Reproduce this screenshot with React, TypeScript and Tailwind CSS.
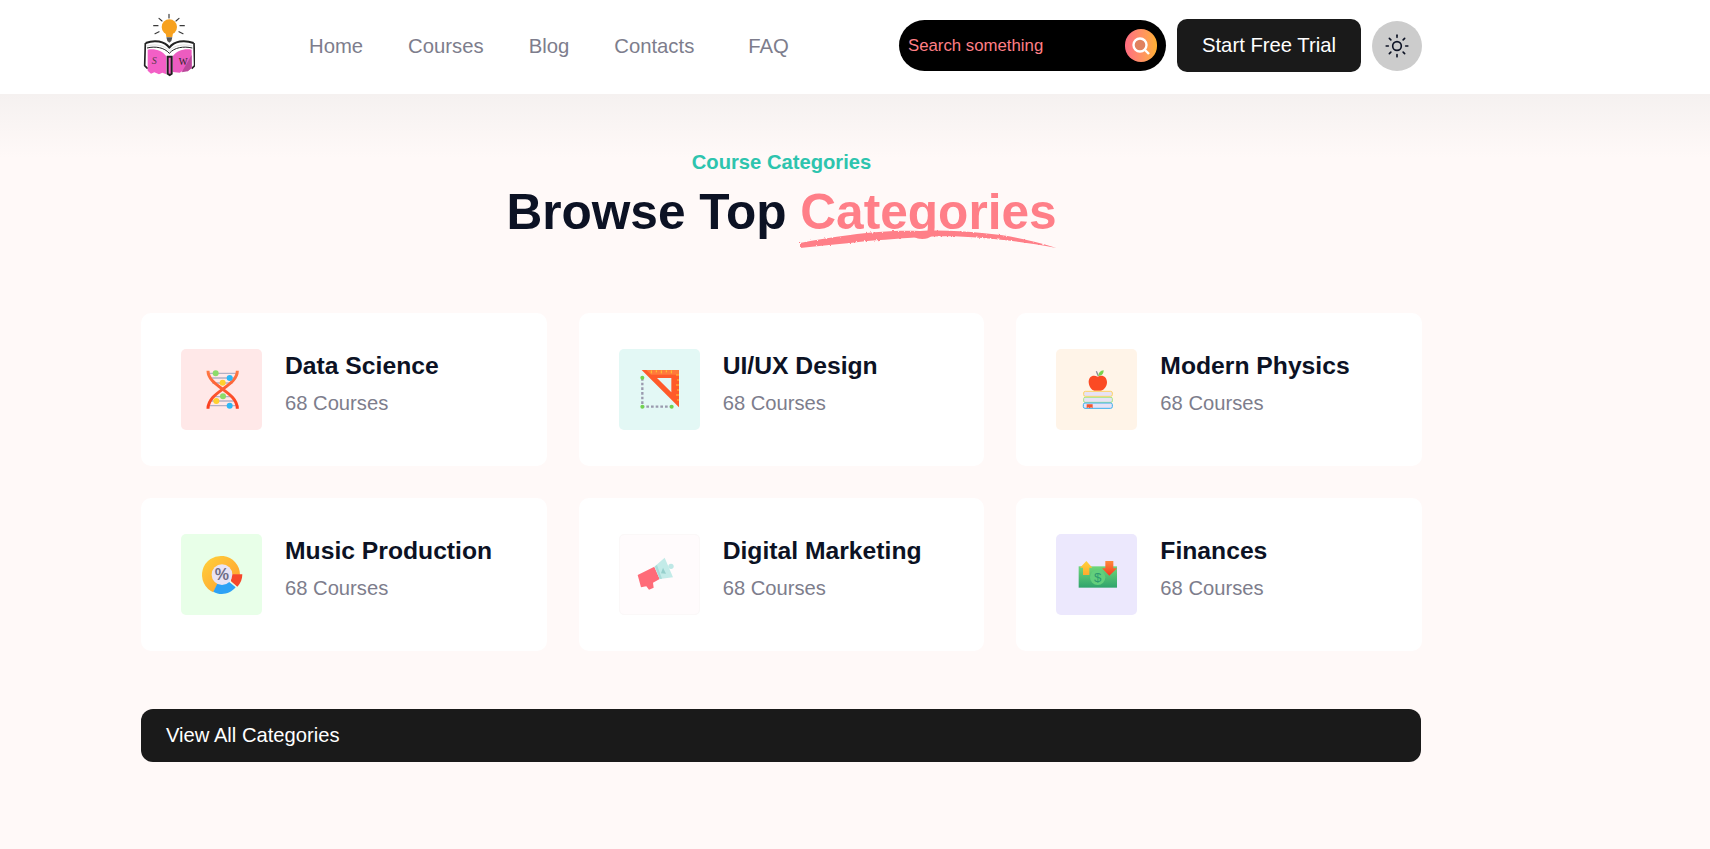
import React from "react";
import { Sun } from "lucide-react";

const font = "font-['Liberation_Sans',Arial,sans-serif]";

function Logo() {
  return (
    <svg width="52" height="64" viewBox="70 40 156 192" className="ml-[2px] mb-[4px] shrink-0">
      {/* bulb rays */}
      <g stroke="#3a3a3a" strokeWidth="3.5" strokeLinecap="round">
        <path d="M148 44v11M118 56l9 8M178 56l-9 8M102 78h13M194 78h-13M106 102l12-6M190 102l-12-6" />
      </g>
      <circle cx="149" cy="82" r="23" fill="#f7a11e" />
      <path d="M138 100h22l-2 12h-18z" fill="#f7a11e" />
      <path d="M140 113h18l-3 11-6 5-6-5z" fill="#555" />
      {/* book cover */}
      <g fill="none" strokeLinejoin="round">
        <path d="M78 130c27-10 56-6 71 14 15-20 44-24 73-14" stroke="#222" strokeWidth="6" />
        <path d="M82 139c24-7 52-3 67 15 15-18 43-22 69-15" stroke="#ddd" strokeWidth="3" />
        <path d="M82 145c24-6 52-2 67 16 15-18 43-22 69-16" stroke="#222" strokeWidth="3" />
        <path d="M77 130l-2 68 9 9M223 130l2 68-9 9" stroke="#222" strokeWidth="5" />
      </g>
      {/* pages */}
      <path d="M84 150c22-4 44 3 56 20v54l-12-5-10 5-14-6-10 4-10-9z" fill="#f35fc6" />
      <path d="M159 170c12-17 34-24 57-20v55l-12 10-12-3-12 7-21-2z" fill="#ec5cc0" />
      <path d="M186 218l30-52v39l-12 10z" fill="#b9489a" />
      <path d="M141 168h18v56l-9 6-9-6z" fill="#1d1d1d" />
      <path d="M147 174h6v48h-6z" fill="#f35fc6" />
      <text x="96" y="194" fontSize="30" fontStyle="italic" fontFamily="Liberation Serif" fill="#5a3a4a">S</text>
      <text x="177" y="195" fontSize="28" fontFamily="Liberation Serif" fill="#222">W</text>
    </svg>
  );
}

function DnaIcon() {
  return (
    <svg width="40" height="40" viewBox="94 88 120 120">
      <defs>
        <linearGradient id="dna" x1="0" y1="0" x2="0" y2="1">
          <stop offset="0" stopColor="#ff7a45" />
          <stop offset="1" stopColor="#fb3b1e" />
        </linearGradient>
      </defs>
      <g stroke="#b3b0c4" strokeWidth="4">
        <path d="M116 98h80M116 112h80M125 127h60M125 168h60M116 181h80M116 195h80" />
      </g>
      <path d="M112 90c0 48 88 62 88 114" fill="none" stroke="url(#dna)" strokeWidth="9" />
      <path d="M200 90c0 48-88 62-88 114" fill="none" stroke="url(#dna)" strokeWidth="9" />
      <circle cx="135" cy="98" r="9" fill="#8cdc6a" />
      <circle cx="177" cy="112" r="9" fill="#2bb8f7" />
      <circle cx="156" cy="126" r="9" fill="#ffd02e" />
      <circle cx="157" cy="167" r="9" fill="#8cdc6a" />
      <circle cx="137" cy="181" r="9" fill="#ffd02e" />
      <circle cx="177" cy="195" r="9" fill="#2bb8f7" />
    </svg>
  );
}

function RulerIcon() {
  return (
    <svg width="40" height="40" viewBox="88 88 120 120" className="overflow-visible">
      <path d="M98 112v86h88" fill="none" stroke="#9a9aae" strokeWidth="7" strokeDasharray="8 6" />
      <circle cx="98" cy="111" r="6" fill="#72d24f" />
      <circle cx="98" cy="198" r="6" fill="#72d24f" />
      <circle cx="186" cy="198" r="6" fill="#72d24f" />
      <path fillRule="evenodd" d="M96 88h112v112zM142 112l43 43v-43z" fill="#ff5a2a" />
      <path d="M110 88h98v14h-84z" fill="#ff7a3c" />
      <path d="M125 89v9M140 89v6M155 89v9M170 89v6M185 89v9M199 103h9M202 118h6M199 133h9M202 148h6M199 163h9M202 178h6" stroke="#ffc82e" strokeWidth="3" />
    </svg>
  );
}

function AppleBooksIcon() {
  return (
    <svg width="40" height="40" viewBox="94 88 120 120">
      <path d="M152 92l6 14" stroke="#8a8a9a" strokeWidth="4" />
      <path d="M158 106c0-10 6-16 16-17 0 10-5 17-16 17z" fill="#7ad24f" />
      <path d="M156 108c-14-8-28 0-27 17 1 12 8 24 17 25h20c9-1 18-13 18-25 0-17-14-25-28-17z" fill="#fb4a24" />
      <rect x="114" y="152" width="86" height="15" rx="5" fill="#e7e2f5" stroke="#ffd363" strokeWidth="3" />
      <rect x="114" y="170" width="86" height="15" rx="4" fill="#e7e2f5" stroke="#a6e687" strokeWidth="3" />
      <rect x="113" y="187" width="87" height="16" rx="5" fill="#e7e2f5" stroke="#39aef0" strokeWidth="3" />
      <path d="M123 191h18v12l-5-3-4 3-4-3-5 3z" fill="#f4562e" />
    </svg>
  );
}

function ChartIcon() {
  return (
    <svg width="40" height="40" viewBox="94 88 120 120" className="overflow-visible">
      <defs>
        <linearGradient id="dial" x1="0" y1="0" x2="1" y2="1">
          <stop offset="0" stopColor="#ffd23a" />
          <stop offset="1" stopColor="#ff9a2e" />
        </linearGradient>
      </defs>
      <path d="M128 200a57 57 0 1 1 80-53l-52 1z" fill="url(#dial)" />
      <path d="M128 198l14-28c12 6 24 4 31-3l22 18c-16 20-45 26-67 13z" fill="#2ea2f5" />
      <path d="M180 146h35c0 14-5 27-15 37l-19-16z" fill="#f6472a" />
      <circle cx="154" cy="147" r="31" fill="#e9e4f5" />
      <text x="154" y="164" textAnchor="middle" fontSize="48" fontWeight="700" fontFamily="Liberation Sans" fill="#6f6d85">%</text>
    </svg>
  );
}

function MegaphoneIcon() {
  return (
    <svg width="40" height="40" viewBox="88 88 120 120" className="overflow-visible">
      <circle cx="184" cy="122" r="8" fill="#bfe8e6" />
      <path d="M84 148l50-25 16 37-20 11 2 15-14 6-8-10-16 3z" fill="#ff6b78" />
      <path d="M134 123l31-27 25 59-40 5z" fill="#c3ebe8" />
      <path d="M136 122l14 38 7-1-15-41z" fill="#a8dcd9" />
      <path d="M160 126l9 18-15-1z" fill="#96d0cc" />
    </svg>
  );
}

function MoneyIcon() {
  return (
    <svg width="40" height="40" viewBox="94 88 120 120" className="overflow-visible">
      <defs>
        <linearGradient id="bill" x1="0" y1="0" x2="0" y2="1">
          <stop offset="0" stopColor="#6fd77a" />
          <stop offset="1" stopColor="#2fa46c" />
        </linearGradient>
        <linearGradient id="up" x1="0" y1="0" x2="0" y2="1">
          <stop offset="0" stopColor="#ffd23a" />
          <stop offset="1" stopColor="#ffa92e" />
        </linearGradient>
        <linearGradient id="down" x1="0" y1="0" x2="0" y2="1">
          <stop offset="0" stopColor="#ff8a3a" />
          <stop offset="1" stopColor="#f43a24" />
        </linearGradient>
      </defs>
      <rect x="99" y="122" width="115" height="64" fill="url(#bill)" />
      <circle cx="156" cy="155" r="23" fill="#62cf7c" />
      <text x="156" y="170" textAnchor="middle" fontSize="40" fontFamily="Liberation Sans" fill="#2c9a70">$</text>
      <path d="M122 106l18 20h-9v22h-19v-22h-9z" fill="url(#up)" />
      <path d="M179 106h24v22h11l-23 22-22-22h10z" fill="url(#down)" />
    </svg>
  );
}

const categories = [
  { title: "Data Science", box: "bg-[#ffe8e8]", icon: <DnaIcon /> },
  { title: "UI/UX Design", box: "bg-[#e3f8f5]", icon: <RulerIcon /> },
  { title: "Modern Physics", box: "bg-[#fff4e8]", icon: <AppleBooksIcon /> },
  { title: "Music Production", box: "bg-[#e8ffe8]", icon: <ChartIcon /> },
  { title: "Digital Marketing", box: "bg-[#fffbfc] border border-[#fbf8f8]", icon: <MegaphoneIcon /> },
  { title: "Finances", box: "bg-[#ece8fd]", icon: <MoneyIcon /> },
];

function CategoryCard({ title, box, icon }: (typeof categories)[number]) {
  return (
    <div className="flex h-[153px] items-start gap-[23px] rounded-[10px] bg-white pl-[40px] pt-[36px]">
      <div className={`flex h-[81px] w-[81px] shrink-0 items-center justify-center rounded-[5px] ${box}`}>{icon}</div>
      <div className="pt-[1px]">
        <h3 className="text-[24.7px] leading-[32px] font-bold text-[#0c1224]">{title}</h3>
        <p className="mt-[7px] text-[20.2px] leading-[28px] text-[#7d7d8c]">68 Courses</p>
      </div>
    </div>
  );
}

export default function App() {
  return (
    <div className={`min-h-[849px] bg-[#fff9f8] ${font}`}>
      {/* Navbar */}
      <header className="h-[94px] bg-white">
        <div className="ml-[141px] flex h-full w-[1281px] items-center">
          <Logo />
          <nav className="ml-[114px] mb-[2px] flex gap-[45px] text-[20.3px] text-[#7d7d8c]">
            <a>Home</a>
            <a>Courses</a>
            <a>Blog</a>
            <a>Contacts</a>
            <a className="ml-[9px]">FAQ</a>
          </nav>
          <div className="ml-auto mb-[3px] flex items-center gap-[11px]">
            <div className="flex h-[51px] w-[267px] items-center rounded-full bg-black pl-[9px] pr-[9px]">
              <span className="flex-1 text-[16.8px] text-[#ff7f86]">Search something</span>
              <span className="flex h-[33px] w-[32px] items-center justify-center rounded-full bg-gradient-to-r from-[#ff6b81] to-[#ffb02e]">
                <svg width="22" height="22" viewBox="0 0 22 22" fill="#e0825f" stroke="#fff" strokeWidth="2.4">
                  <circle cx="10" cy="10" r="6.5" />
                  <path d="M15 15l4 4" />
                </svg>
              </span>
            </div>
            <button className="h-[53px] w-[184px] rounded-[10px] bg-[#1a1a1a] text-[20.3px] text-white">Start Free Trial</button>
            <button className="flex h-[50px] w-[50px] items-center justify-center rounded-full bg-[#cccccc]">
              <Sun size={26} strokeWidth={1.5} className="text-[#0c1224]" />
            </button>
          </div>
        </div>
      </header>

      <main className="bg-[linear-gradient(to_bottom,#f5f1f0_0px,#fff9f8_64px)] pt-[55px] pb-[87px]">
        <div className="ml-[141px] w-[1281px]">
          <div className="text-center">
            <p className="text-[20.2px] leading-[26px] font-bold text-[#2ec4ae]">Course Categories</p>
            <h2 className="mt-[7px] text-[49.6px] leading-[60px] font-bold text-[#0c1224]">
              Browse Top{" "}
              <span className="relative inline-block text-[#ff7f88]">
                Categories
                <svg className="absolute left-0 top-[46px] h-[21px] w-full overflow-visible" viewBox="0 0 256 21" fill="#ff7f88" preserveAspectRatio="none">
                  <defs>
                    <filter id="rough" x="-5%" y="-30%" width="110%" height="160%">
                      <feTurbulence type="fractalNoise" baseFrequency="0.5" numOctaves="2" seed="3" />
                      <feDisplacementMap in="SourceGraphic" scale="2.5" />
                    </filter>
                  </defs>
                  <path filter="url(#rough)" d="M0 15c15-3 32-6 50-8 22-3 48-5 70-4 20-1 42 0 62 2 24 2 50 7 74 15-24-5-50-8-74-10-22-2-42-2-62-1-22 2-48 3-70 6-18 2-34 3-50 5z" />
                </svg>
              </span>
            </h2>
          </div>

          <div className="mt-[71px] grid grid-cols-3 gap-x-[32px] gap-y-[32px]">
            {categories.map((c) => (
              <CategoryCard key={c.title} {...c} />
            ))}
          </div>

          <button className="mt-[58px] h-[53px] w-[1280px] rounded-[12px] bg-[#1a1a1a] pl-[25px] text-left text-[20.2px] text-white">
            View All Categories
          </button>
        </div>
      </main>
    </div>
  );
}
